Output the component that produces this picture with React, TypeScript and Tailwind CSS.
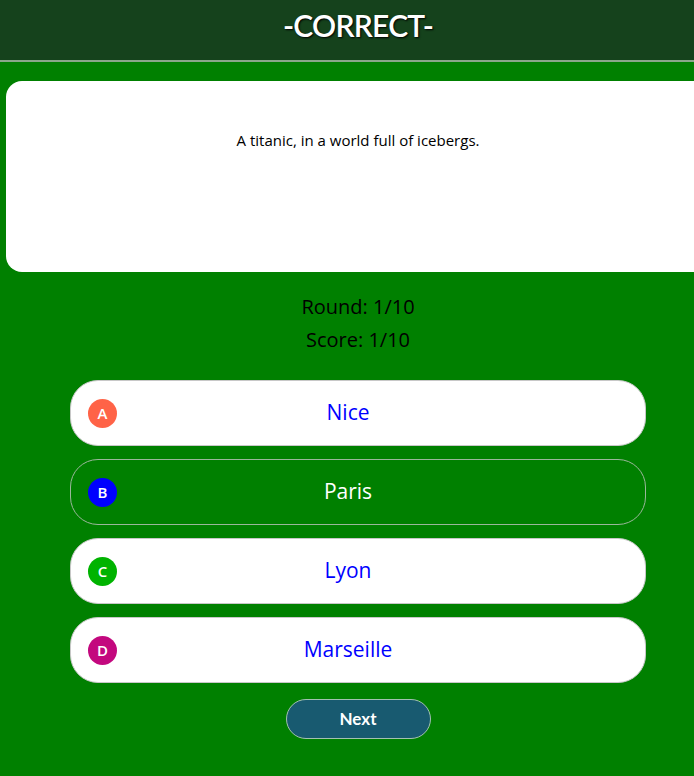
export default function App() {
  const answers = [
    { letter: "A", text: "Nice", dot: "bg-[#ff6347]", picked: false },
    { letter: "B", text: "Paris", dot: "bg-[#0000ff]", picked: true },
    { letter: "C", text: "Lyon", dot: "bg-[#00b300]", picked: false },
    { letter: "D", text: "Marseille", dot: "bg-[#c3087e]", picked: false },
  ];

  return (
    <div className="w-full min-h-[776px] overflow-hidden bg-[#008000] font-['Open_Sans',sans-serif]">
      <div className="w-[716px] flex flex-col">
        {/* Header */}
        <header className="h-[62px] bg-[#15421c] border-b-2 border-[#8aa78a] flex justify-center pt-[7px]">
          <h1 className="font-['Lato',sans-serif] text-[30px] leading-[36px] font-semibold text-white tracking-tight [text-shadow:1px_1px_2px_#000]">
            -CORRECT-
          </h1>
        </header>

        {/* Question card */}
        <div className="mx-1.5 mt-[19px] h-[191px] bg-white rounded-2xl pt-[48px] text-center">
          <p className="text-[15px] font-medium text-black">A titanic, in a world full of icebergs.</p>
        </div>

        {/* Round / score */}
        <div className="mt-[18px] flex flex-col items-center text-[20px] font-medium text-black leading-[33px]">
          <p>Round: 1/10</p>
          <p>Score: 1/10</p>
        </div>

        {/* Answers */}
        <div className="mt-[24px] mx-auto w-[576px] flex flex-col gap-[13px]">
          {answers.map((a) => (
            <div
              key={a.letter}
              className={
                a.picked
                  ? "relative h-[66px] rounded-[28px] border border-[#9bb79b] flex items-center justify-center pr-[20px]"
                  : "relative h-[66px] rounded-[28px] bg-white border border-[#c8c8c8] flex items-center justify-center pr-[20px]"
              }
            >
              <span
                className={`absolute left-[17px] w-[29px] h-[29px] rounded-full ${a.dot} flex items-center justify-center text-white text-[15px] font-semibold`}
              >
                {a.letter}
              </span>
              <span className={a.picked ? "text-[21px] font-medium text-white" : "text-[21px] font-medium text-[#0000ff]"}>
                {a.text}
              </span>
            </div>
          ))}
        </div>

        {/* Next */}
        <div className="mt-[16px] flex justify-center">
          <button className="w-[145px] h-[40px] rounded-full bg-[#185a70] border border-[#a3c1b0] text-white text-[17px] font-bold font-['Lato',sans-serif]">
            Next
          </button>
        </div>
      </div>
    </div>
  );
}
